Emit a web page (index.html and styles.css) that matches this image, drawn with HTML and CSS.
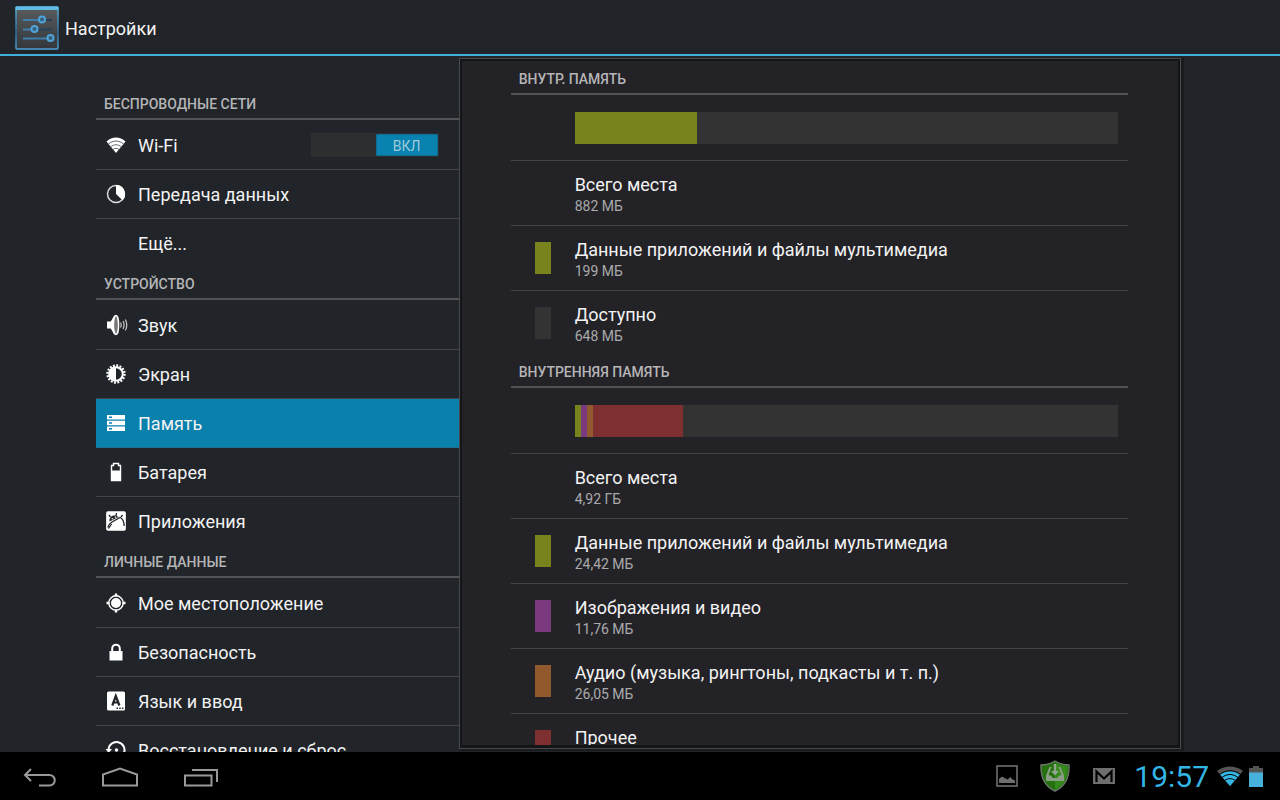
FILE: index.html
```html
<!DOCTYPE html>
<html lang="ru">

<head>
    <meta charset="UTF-8">
    <meta name="viewport" content="width=device-width, initial-scale=1.0">
    <title>Настройки</title>
    <link rel="stylesheet" href="styles.css">
</head>

<body>
    <header class="action-bar">
        <svg class="app-icon" width="44" height="44" viewBox="0 0 44 44" aria-hidden="true">
            <defs>
                <linearGradient id="iconBody" x1="0" y1="0" x2="0" y2="1">
                    <stop offset="0" stop-color="#5a5c5e"/>
                    <stop offset="1" stop-color="#33373b"/>
                </linearGradient>
                <linearGradient id="iconEdge" x1="0" y1="0" x2="0" y2="1">
                    <stop offset="0" stop-color="#5cb5dc"/>
                    <stop offset="0.6" stop-color="#2c6b96"/>
                    <stop offset="1" stop-color="#4d9fd6"/>
                </linearGradient>
            </defs>
            <rect x="1" y="1" width="42" height="42" rx="1" fill="url(#iconBody)" stroke="url(#iconEdge)" stroke-width="1.5"/>
            <rect x="0.5" y="0.5" width="43" height="3.5" rx="1" fill="#5fbce4"/>
            <g stroke-width="2" fill="none">
                <path d="M8 14h15M8 23.500h8M8 32.500h24" stroke="#3f7fae"/>
                <path d="M31 14h6M23 23.500h14" stroke="#28405a"/>
                <g fill="#3a5f7c" stroke="#4fa3d9">
                    <circle cx="27" cy="13.500" r="3"/>
                    <circle cx="19.500" cy="23" r="3"/>
                    <circle cx="35.500" cy="32" r="3"/>
                </g>
            </g>
        </svg>
        <h1>Настройки</h1>
    </header>

    <main class="content">
        <nav class="sidebar">
            <h2 class="category">Беспроводные сети</h2>
            <ul class="list">
                <li class="item">
                    <a href="#wifi">
                        <svg class="icon" viewBox="0 0 24 24">
                            <path d="M2.500 8.500C8 3.200 16 3.200 21.500 8.500L12 20z" fill="#fff"/>
                            <path d="M4.300 11.200c4.600-4.200 10.800-4.200 15.400 0M6.600 14c3.300-3 7.500-3 10.800 0M8.800 16.600c2-1.700 4.400-1.700 6.400 0" fill="none" stroke="#66696d" stroke-width="1"/>
                        </svg>
                        Wi-Fi
                    </a>
                    <label class="switch">
                        <input type="checkbox" checked aria-label="Wi-Fi">
                        <span class="thumb">ВКЛ</span>
                    </label>
                </li>
                <li class="item">
                    <a href="#data">
                        <svg class="icon" viewBox="0 0 24 24">
                            <circle cx="12" cy="12" r="8.500" fill="none" stroke="#ddd" stroke-width="1.500"/>
                            <path d="M12 3a9 9 0 0 1 6.500 15.200L12 12z" fill="#fff"/>
                        </svg>
                        Передача данных
                    </a>
                </li>
                <li class="item">
                    <a href="#more"><span class="icon"></span>Ещё...</a>
                </li>
            </ul>

            <h2 class="category">Устройство</h2>
            <ul class="list">
                <li class="item">
                    <a href="#sound">
                        <svg class="icon" viewBox="0 0 24 24">
                            <path d="M3 8.500h3.500C8 7 9 4 10.500 2v20C9 20 8 17 6.500 15.500H3z" fill="#fff"/>
                            <ellipse cx="12" cy="12" rx="2.600" ry="9.500" fill="#777" stroke="#fff" stroke-width="1.500"/>
                            <path d="M16.500 9.500q1.500 2.500 0 5M19 8q2.200 4 0 8M21.300 6.500q3 5.500 0 11" fill="none" stroke="#ccc" stroke-width="1.200"/>
                        </svg>
                        Звук
                    </a>
                </li>
                <li class="item">
                    <a href="#display">
                        <svg class="icon" viewBox="0 0 24 24">
                            <circle cx="12" cy="12" r="8.500" fill="none" stroke="#fff" stroke-width="2.400" stroke-dasharray="1.900 1.438"/>
                            <circle cx="12" cy="12" r="6.800" fill="#212429" stroke="#fff" stroke-width="2"/>
                            <path d="M12 5a7 7 0 0 0 0 14z" fill="#fff"/>
                        </svg>
                        Экран
                    </a>
                </li>
                <li class="item selected">
                    <a href="#storage">
                        <svg class="icon" viewBox="0 0 24 24">
                            <path d="M3 4h18v4.500H3zM3 9.800h18v4.500H3zM3 15.600h18v4.500H3z" fill="#fff"/>
                            <path d="M5 6.300h3M5 12h3M5 17.800h3" stroke="#0a80ad" stroke-width="1.400"/>
                        </svg>
                        Память
                    </a>
                </li>
                <li class="item">
                    <a href="#battery">
                        <svg class="icon" viewBox="0 0 24 24">
                            <path d="M9.500 3.500h5v2h2v15h-9v-15h2z" fill="none" stroke="#fff" stroke-width="1.400"/>
                            <path d="M7 10.500h10V21H7z" fill="#fff"/>
                        </svg>
                        Батарея
                    </a>
                </li>
                <li class="item">
                    <a href="#apps">
                        <svg class="icon" viewBox="0 0 24 24">
                            <rect x="2.900" y="2.900" width="18.200" height="18.200" rx="1" fill="#fff" stroke="#fff" stroke-width="1.500"/>
                            <path d="M3.800 18.500c1-3 2.500-4.500 4.200-5.500l8-4.500c2.500 1 4 4 4.200 8.500" fill="none" stroke="#212429" stroke-width="1.300"/>
                            <path d="M5.500 12.500C5 9.500 7 7 9.500 6.500c2-.3 4 .2 5 1.500z" fill="#212429"/>
                            <path d="M6.500 8L5 6M12 7l.5-3M17 8l1.500-2M4.500 19.500l3-4.500" fill="none" stroke="#212429" stroke-width="1.300"/>
                            <circle cx="8.300" cy="9.800" r="0.800" fill="#fff"/>
                            <circle cx="11.500" cy="8.200" r="0.800" fill="#fff"/>
                        </svg>
                        Приложения
                    </a>
                </li>
            </ul>

            <h2 class="category">Личные данные</h2>
            <ul class="list">
                <li class="item">
                    <a href="#location">
                        <svg class="icon" viewBox="0 0 24 24">
                            <circle cx="12" cy="12" r="7.200" fill="none" stroke="#fff" stroke-width="1.400"/>
                            <circle cx="12" cy="12" r="5" fill="#fff"/>
                            <path d="M12 2.500v3M12 18.500v3M2.500 12h3M18.500 12h3" stroke="#fff" stroke-width="2.400"/>
                        </svg>
                        Мое местоположение
                    </a>
                </li>
                <li class="item">
                    <a href="#security">
                        <svg class="icon" viewBox="0 0 24 24">
                            <path d="M5.500 11h13v9.500h-13z" fill="#fff"/>
                            <path d="M8.200 11V8.500a3.800 3.800 0 0 1 7.600 0V11" fill="none" stroke="#fff" stroke-width="2"/>
                        </svg>
                        Безопасность
                    </a>
                </li>
                <li class="item">
                    <a href="#language">
                        <svg class="icon" viewBox="0 0 24 24">
                            <rect x="3" y="2.500" width="18" height="19" rx="1.500" fill="#fff"/>
                            <path d="M8.300 16.500L11.800 7l3.600 9.500M9.500 13.500h4.700" fill="none" stroke="#212429" stroke-width="2.200"/>
                            <path d="M12.500 19.300h1.500M15.200 19.300h1.500M17.900 19.300h1.500" stroke="#212429" stroke-width="1.400"/>
                        </svg>
                        Язык и ввод
                    </a>
                </li>
                <li class="item">
                    <a href="#backup">
                        <svg class="icon" viewBox="0 0 24 24">
                            <path d="M4.500 12a8 8 0 1 1 3 6.200" fill="none" stroke="#fff" stroke-width="2"/>
                            <path d="M1.500 11h6.500l-3.300 4z" fill="#fff"/>
                            <circle cx="12.500" cy="12" r="1.700" fill="#fff"/>
                        </svg>
                        Восстановление и сброс
                    </a>
                </li>
            </ul>
        </nav>

        <section class="panel">
            <h2 class="category">Внутр. память</h2>
            <ul class="list">
                <li class="row bar-row">
                    <div class="bar">
                        <span class="apps" style="width: 22.6%"></span>
                    </div>
                </li>
                <li class="row">
                    <span class="swatch"></span>
                    <div class="info">
                        <p class="name">Всего места</p>
                        <p class="size">882 МБ</p>
                    </div>
                </li>
                <li class="row">
                    <span class="swatch apps"></span>
                    <div class="info">
                        <p class="name">Данные приложений и файлы мультимедиа</p>
                        <p class="size">199 МБ</p>
                    </div>
                </li>
                <li class="row">
                    <span class="swatch free"></span>
                    <div class="info">
                        <p class="name">Доступно</p>
                        <p class="size">648 МБ</p>
                    </div>
                </li>
            </ul>

            <h2 class="category">Внутренняя память</h2>
            <ul class="list">
                <li class="row bar-row">
                    <div class="bar">
                        <span class="apps" style="width: 1.1%"></span>
                        <span class="images" style="width: 1.1%"></span>
                        <span class="audio" style="width: 1.1%"></span>
                        <span class="other" style="width: 16.6%"></span>
                    </div>
                </li>
                <li class="row">
                    <span class="swatch"></span>
                    <div class="info">
                        <p class="name">Всего места</p>
                        <p class="size">4,92 ГБ</p>
                    </div>
                </li>
                <li class="row">
                    <span class="swatch apps"></span>
                    <div class="info">
                        <p class="name">Данные приложений и файлы мультимедиа</p>
                        <p class="size">24,42 МБ</p>
                    </div>
                </li>
                <li class="row">
                    <span class="swatch images"></span>
                    <div class="info">
                        <p class="name">Изображения и видео</p>
                        <p class="size">11,76 МБ</p>
                    </div>
                </li>
                <li class="row">
                    <span class="swatch audio"></span>
                    <div class="info">
                        <p class="name">Аудио (музыка, рингтоны, подкасты и т. п.)</p>
                        <p class="size">26,05 МБ</p>
                    </div>
                </li>
                <li class="row">
                    <span class="swatch other"></span>
                    <div class="info">
                        <p class="name">Прочее</p>
                    </div>
                </li>
            </ul>
        </section>
    </main>

    <footer class="system-bar">
        <button class="nav-button" aria-label="Назад">
            <svg width="36" height="24" viewBox="0 0 36 24">
                <path d="M9 3L3 9l6 6M3 9h24.500a5 5 0 0 1 0 10.500H17" fill="none" stroke="#999" stroke-width="2"/>
            </svg>
        </button>
        <button class="nav-button" aria-label="Домой">
            <svg width="38" height="24" viewBox="0 0 38 24">
                <path d="M2 19.500V8.500L19 2.500l17 6v11z" fill="none" stroke="#999" stroke-width="2"/>
            </svg>
        </button>
        <button class="nav-button" aria-label="Недавние">
            <svg width="36" height="24" viewBox="0 0 36 24">
                <path d="M3 9.500h26.500v10H3zM10 4h25v12" fill="none" stroke="#999" stroke-width="2"/>
            </svg>
        </button>

        <div class="notifications">
            <svg width="22" height="22" viewBox="0 0 22 22">
                <rect x="1" y="1" width="20" height="20" fill="none" stroke="#6e6e6e" stroke-width="1.600"/>
                <path d="M3 18v-4l3-2.500 2.500 1.500 3 1.500 3-2.500 1.500 2 3 1.500V18z" fill="#6e6e6e"/>
            </svg>
            <svg width="30" height="32" viewBox="0 0 30 32">
                <path d="M15 1c4 2.500 9 4 14 4 .5 12-3 21-14 26C4 26 .5 17 1 5c5 0 10-1.500 14-4z" fill="#24700f" stroke="#6b756b" stroke-width="1.400"/>
                <path d="M15 3c4 2 8 3 12.500 3.500C27.500 17 25 25 15 29.500z" fill="#338a1a"/>
                <path d="M9.500 7h2L8.500 15l3 1 1 2h5l1-2 3-1-3-8h2L24 15.500V21H6v-5.500z" fill="#8b9d86"/>
                <path d="M13.800 4h2.400v7H19l-4 4.500-4-4.500h2.800z" fill="#93a38f"/>
            </svg>
            <svg width="24" height="18" viewBox="0 0 24 18">
                <path d="M1 1h22v16H1z" fill="#6e6e6e"/>
                <path d="M4.500 15V4.500l7.500 7 7.500-7V15" fill="none" stroke="#000" stroke-width="2.200"/>
            </svg>
        </div>
        <time class="clock">19:57</time>
        <div class="status">
            <svg width="26" height="20" viewBox="0 0 26 20">
                <path d="M0 5C7.500-1 18.500-1 26 5L13 20z" fill="#555"/>
                <path d="M3 8.500C9 4 17 4 23 8.500L13 20z" fill="#33b5e5"/>
                <path d="M2.500 8.500c6.500-5 14.500-5 21 0M5 11.500c5-4 11-4 16 0M7.700 14.500c3.300-2.500 7.300-2.500 10.600 0" fill="none" stroke="#000" stroke-width="1"/>
            </svg>
            <svg width="14" height="21" viewBox="0 0 14 21">
                <path d="M4 0h6v2h4v5H0V2h4z" fill="#555"/>
                <path d="M0 6.500h14V21H0z" fill="#46b2dc"/>
            </svg>
        </div>
    </footer>
</body>

</html>
```

FILE: styles.css
```css
* {
    box-sizing: border-box;
}

body {
    display: flex;
    flex-direction: column;
    height: 100vh;
    margin: 0;
    overflow: hidden;
    background-color: #212429;
    color: #f3f3f3;
    font-family: Roboto, "Noto Sans", sans-serif;
    font-size: 18px;
}

h1,
h2,
p,
ul {
    margin: 0;
    padding: 0;
}

.action-bar {
    display: flex;
    align-items: center;
    gap: 6px;
    height: 56px;
    padding: 2px 0 0 15px;
    border-bottom: 2px solid #3fb0da;
}

.action-bar h1 {
    font-size: 18px;
    font-weight: 400;
}

.content {
    display: grid;
    flex: 1;
    grid-template-columns: minmax(0, 1fr) minmax(0, 2fr);
    grid-template-rows: 100%;
    min-height: 0;
    padding: 0 7.5%;
    overflow: hidden;
}

/* lists */

.category {
    height: 33px;
    margin-bottom: 1px;
    padding-left: 8px;
    border-bottom: 2px solid #505256;
    color: #b5b5b7;
    font-size: 14px;
    font-weight: 500;
    line-height: 34px;
    text-transform: uppercase;
}

.list {
    list-style: none;
}

.item,
.row {
    border-bottom: 1px solid #414347;
}

.item:last-child,
.row:last-child {
    border-bottom: none;
}

/* left column */

.sidebar {
    padding-top: 31px;
}

.item {
    display: flex;
    align-items: center;
}

.item a {
    display: flex;
    flex: 1;
    align-items: center;
    gap: 10px;
    height: 48px;
    padding-left: 8px;
    color: inherit;
    text-decoration: none;
    white-space: nowrap;
}

.icon {
    width: 24px;
    height: 24px;
}

.selected {
    border-color: #1f6f90;
    background-color: #0a80ad;
}

.switch {
    position: relative;
    display: flex;
    justify-content: flex-end;
    width: 128px;
    height: 24px;
    margin-right: 20px;
    padding: 1px;
    background-color: #2d2e30;
}

.switch input {
    position: absolute;
    inset: 0;
    width: 100%;
    height: 100%;
    margin: 0;
    opacity: 0;
    cursor: pointer;
}

.thumb {
    width: 62px;
    border: 1px solid #0d6d92;
    border-radius: 1px;
    background-color: #0a82b0;
    color: #9fcbdc;
    font-size: 14px;
    line-height: 22px;
    text-align: center;
}

/* right column */

.panel {
    margin: 3px 4px 4px 1px;
    padding: 1px 50px 0 49px;
    overflow: hidden;
    border: 2px solid #141517;
    border-bottom-width: 3px;
    outline: 1px solid #48494c;
    box-shadow: 2px 1px 0 2px #191b1e;
    background-color: #232227;
}

.row {
    display: flex;
    align-items: center;
    gap: 24px;
    min-height: 64px;
    padding-left: 24px;
}

.row:not(:last-child) {
    min-height: 65px;
}

.bar-row {
    padding: 0 10px 0 64px;
}

.bar {
    display: flex;
    flex: 1;
    height: 32px;
    background-color: #333;
}

.swatch {
    width: 16px;
    height: 32px;
}

.info {
    min-height: 42px;
}

.name {
    line-height: 26px;
}

.size {
    color: #aaaaac;
    font-size: 14px;
    line-height: 16px;
}

.apps {
    background-color: #78831d;
}

.images {
    background-color: #7b3a80;
}

.audio {
    background-color: #91592d;
}

.other {
    background-color: #7e3031;
}

.free {
    background-color: #333;
}

/* bottom bar */

.system-bar {
    position: relative;
    display: flex;
    align-items: center;
    height: 48px;
    padding-right: 17px;
    background-color: #000;
}

.nav-button {
    display: flex;
    align-items: center;
    justify-content: center;
    width: 80px;
    height: 48px;
    padding: 3px 0 0;
    border: none;
    background: none;
    cursor: pointer;
}

.notifications {
    display: flex;
    align-items: center;
    gap: 22px;
    margin-left: auto;
}

.clock {
    margin: 0 8px 0 18px;
    color: #33b5e5;
    font-size: 30px;
}

.status {
    display: flex;
    align-items: center;
    gap: 6px;
}
```
